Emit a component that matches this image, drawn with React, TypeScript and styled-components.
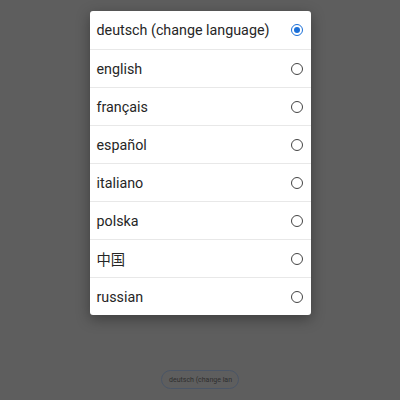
import { styled, createGlobalStyle } from "styled-components";

const GlobalStyle = createGlobalStyle`
    html, body {
        margin: 0;
        padding: 0;
        background: #5e5e5e;
    }
    * {
        box-sizing: border-box;
    }
`;

const Page = styled.div`
    width: 400px;
    height: 400px;
    display: flex;
    flex-direction: column;
    align-items: center;
    padding-top: 11px;
    font-family: Roboto, "Noto Sans CJK SC", sans-serif;
`;

const Dialog = styled.div`
    width: 221px;
    background: #ffffff;
    border-radius: 3px;
    box-shadow: 0 4px 14px rgba(0, 0, 0, 0.35);
    display: flex;
    flex-direction: column;
`;

const Row = styled.div`
    height: 38px;
    display: flex;
    align-items: center;
    justify-content: space-between;
    padding: 0 8px 0 7px;
    border-top: 1px solid #e8e8e8;

    &:first-child {
        border-top: none;
    }
`;

const Label = styled.span`
    font-size: 14.3px;
    color: #262626;
`;

const Radio = styled.span<{ $checked?: boolean }>`
    width: 12px;
    height: 12px;
    border-radius: 50%;
    border: 1.3px solid ${(p) => (p.$checked ? "#1a6fd8" : "#444444")};
    display: flex;
    align-items: center;
    justify-content: center;

    &::after {
        content: "";
        width: 6px;
        height: 6px;
        border-radius: 50%;
        background: ${(p) => (p.$checked ? "#1a6fd8" : "transparent")};
    }
`;

const Spacer = styled.div`
    flex: 1;
`;

const Pill = styled.div`
    width: 78px;
    height: 19px;
    margin-bottom: 11px;
    border: 1.5px solid #4a5566;
    border-radius: 10px;
    display: flex;
    align-items: center;
    padding-left: 7px;
    overflow: hidden;
    white-space: nowrap;
    font-size: 7px;
    color: #2e2e2e;
`;

const languages = [
  "deutsch (change language)",
  "english",
  "français",
  "español",
  "italiano",
  "polska",
  "中国",
  "russian",
];

const App = () => {
  return (
    <Page>
      <GlobalStyle />
      <Dialog>
        {languages.map((lang, i) => (
          <Row key={lang}>
            <Label>{lang}</Label>
            <Radio $checked={i === 0} />
          </Row>
        ))}
      </Dialog>
      <Spacer />
      <Pill>deutsch (change lan</Pill>
    </Page>
  );
};

export default App;
